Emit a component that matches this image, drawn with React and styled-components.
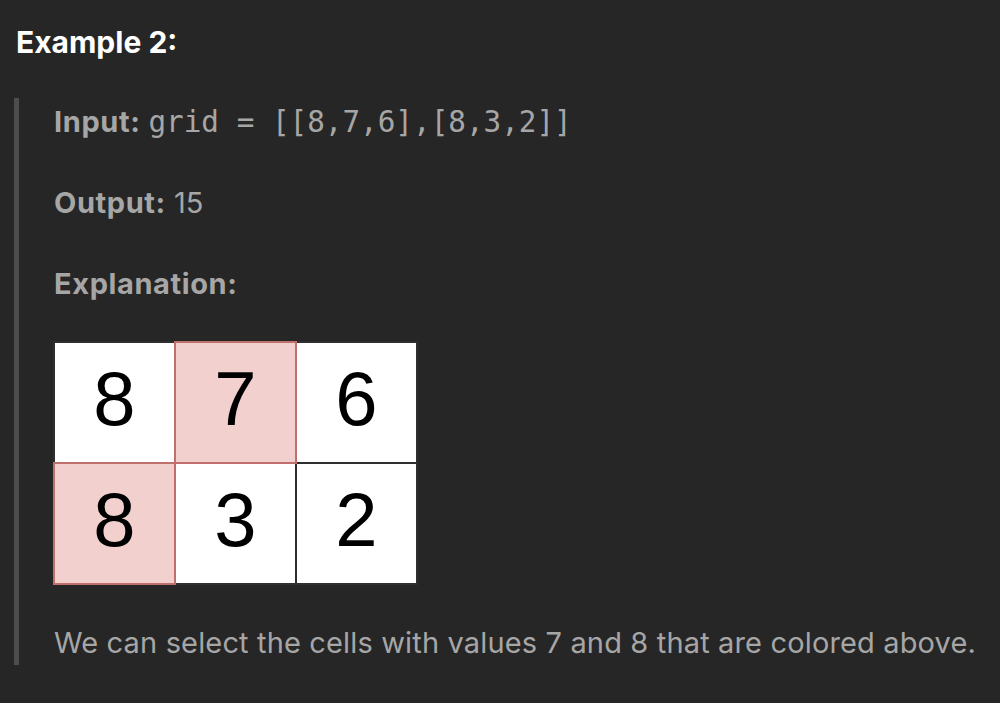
import React from "react";
import styled, { createGlobalStyle } from "styled-components";

const Global = createGlobalStyle`
  html, body { margin: 0; padding: 0; background: #262626; }
  body { font-family: Inter, "Noto Sans", sans-serif; }
`;

const Page = styled.div`
  width: 1000px;
  height: 703px;
  background: #262626;
  box-sizing: border-box;
  padding: 21px 0 0 14px;
  overflow: hidden;
`;

const Heading = styled.div`
  font-family: Inter, sans-serif;
  font-weight: 700;
  font-size: 30px;
  line-height: 42px;
  color: #ffffff;
  padding-left: 2px;
`;

const Quote = styled.div`
  margin-top: 35px;
  border-left: 5px solid #4d4d4d;
  padding: 3px 0 1px 35px;
  display: flex;
  flex-direction: column;
  gap: 39px;
`;

const Line = styled.div`
  font-family: Inter, sans-serif;
  font-size: 29px;
  letter-spacing: 0.15px;
  line-height: 42px;
  color: #a6a6a6;
  white-space: nowrap;
`;

const Label = styled.span`
  font-weight: 700;
  letter-spacing: 0.6px;
  color: #a6a6a6;
  margin-right: 8px;
`;

const Code = styled.code`
  font-family: "DejaVu Sans Mono", monospace;
  font-size: 29.3px;
  letter-spacing: 0;
  color: #a6a6a6;
`;

const Grid = styled.div`
  display: grid;
  grid-template-columns: repeat(3, 121px);
  grid-template-rows: repeat(2, 121px);
  width: 363px;
  margin: -2px 0 -1px;
`;

const Cell = styled.div`
  box-sizing: border-box;
  background: ${(p) => (p.$hl ? "#f2d0ce" : "#ffffff")};
  border: 2px solid ${(p) => (p.$hl ? "#c0706c" : "#2e2e2e")};
  margin: -1px;
  position: relative;
  z-index: ${(p) => (p.$hl ? 1 : 0)};
  display: flex;
  align-items: center;
  justify-content: center;
  padding-bottom: 8px;
  font-family: "Liberation Sans", Arial, sans-serif;
  font-size: 76px;
  line-height: 1;
  color: #000;
  width: 123px;
  height: 123px;
`;

const cells = [
  { v: 8 }, { v: 7, hl: true }, { v: 6 },
  { v: 8, hl: true }, { v: 3 }, { v: 2 },
];

export default function App() {
  return (
    <Page>
      <Global />
      <Heading>Example 2:</Heading>
      <Quote>
        <Line>
          <Label>Input:</Label>
          <Code>grid = [[8,7,6],[8,3,2]]</Code>
        </Line>
        <Line>
          <Label>Output:</Label>15
        </Line>
        <Line>
          <Label>Explanation:</Label>
        </Line>
        <Grid>
          {cells.map((c, i) => (
            <Cell key={i} $hl={c.hl}>{c.v}</Cell>
          ))}
        </Grid>
        <Line>We can select the cells with values 7 and 8 that are colored above.</Line>
      </Quote>
    </Page>
  );
}
